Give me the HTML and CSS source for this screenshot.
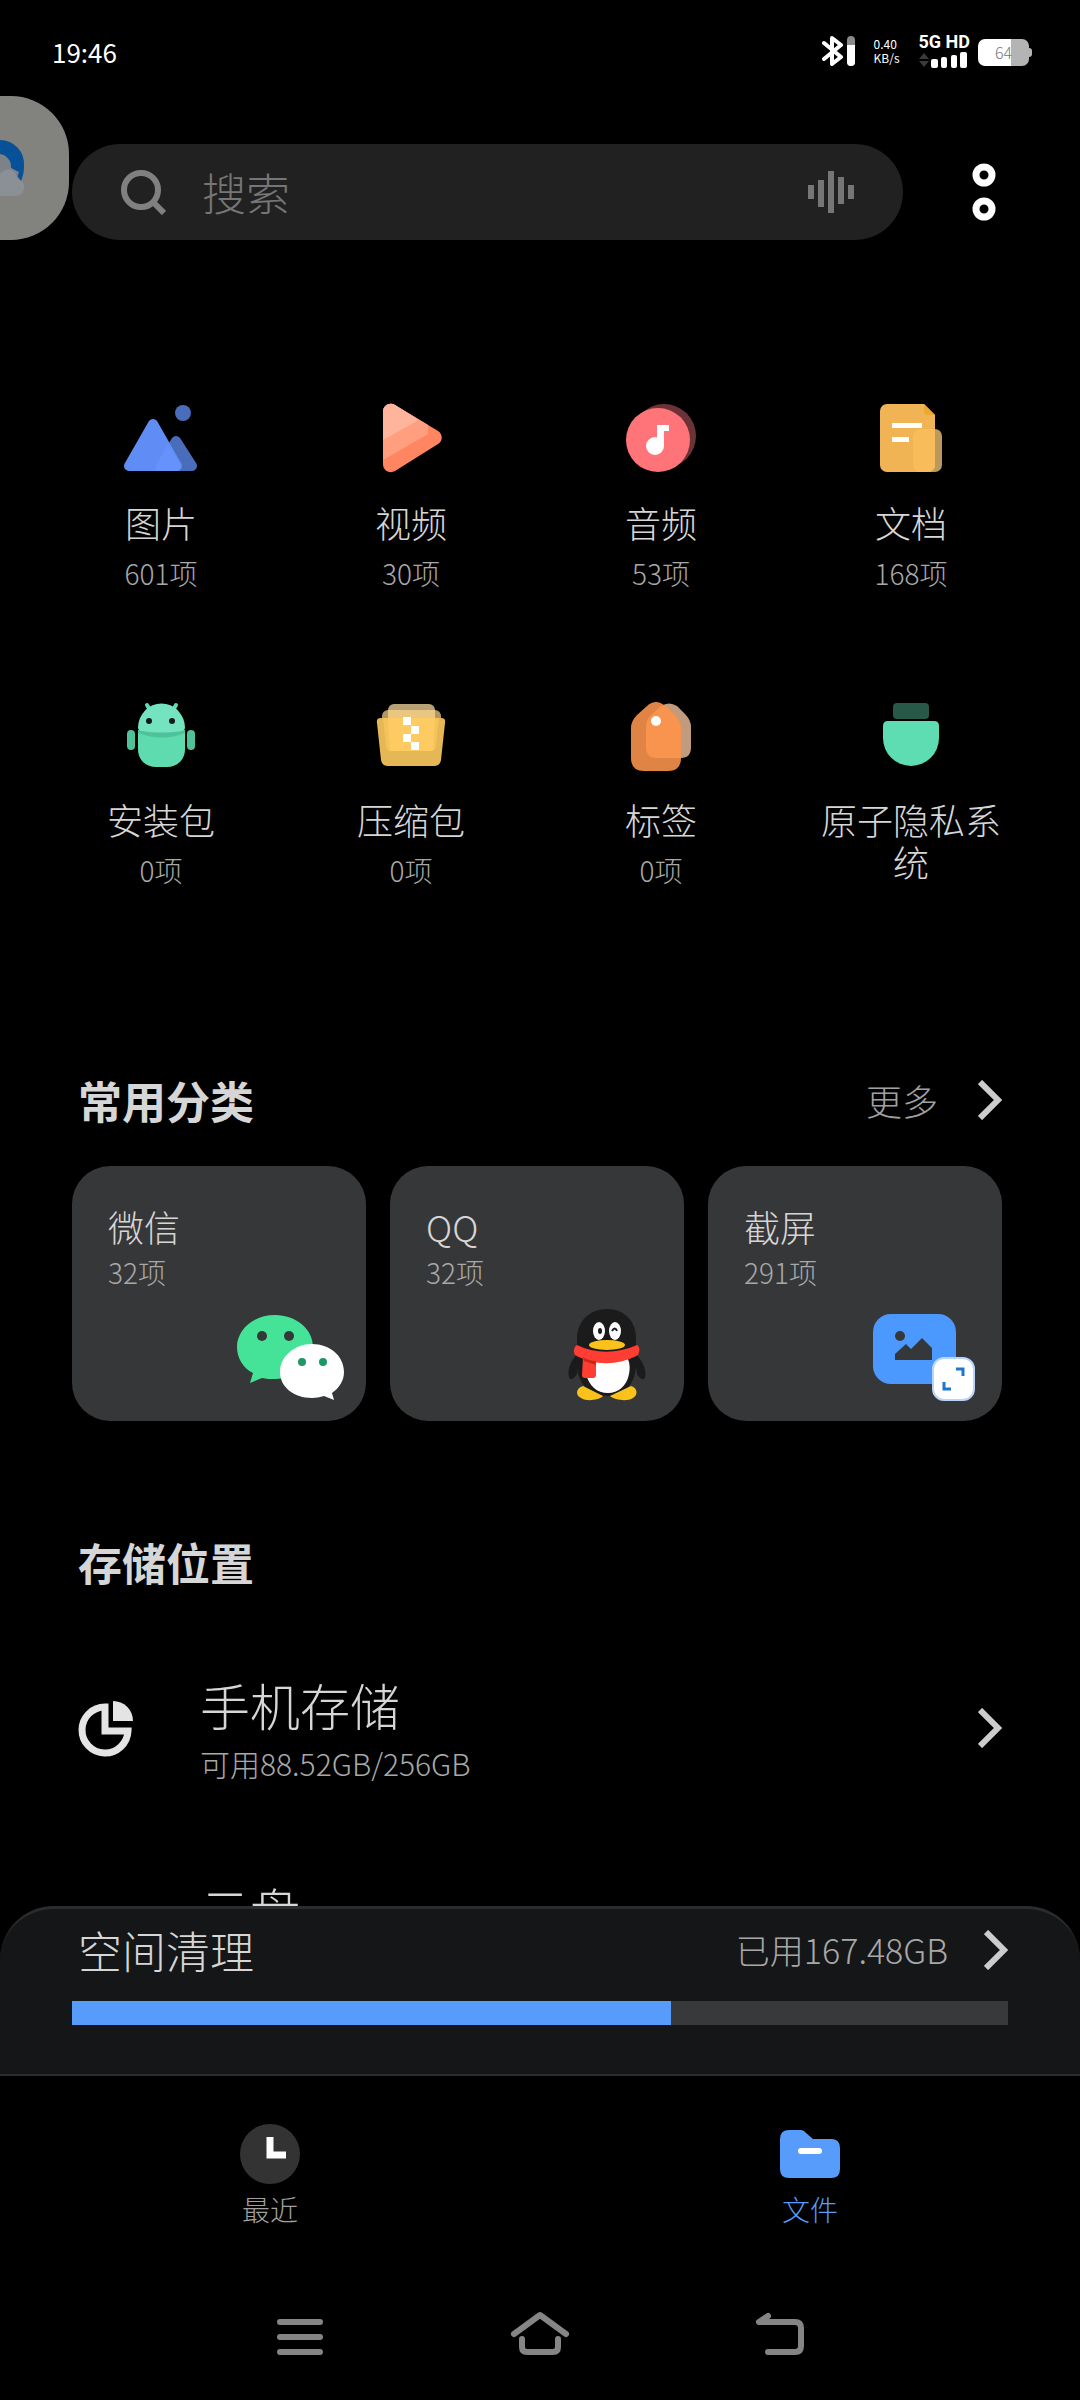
FILE: index.html
```html
<!DOCTYPE html>
<html lang="zh-CN">
<head>
  <meta charset="UTF-8" />
  <meta name="viewport" content="width=device-width, initial-scale=1.0"/>
  <title>文件管理</title>
  <link rel="stylesheet" href="styles.css">
</head>
<body>
  <div class="statusbar">
    <span class="time">19:46</span>
    <div class="status-icons">
      <svg class="bluetooth" width="34" height="32" viewBox="0 0 34 32">
        <path d="M2 8l17 14-9 7V3l9 7L2 24" fill="none" stroke="#fff" stroke-width="4" stroke-linejoin="round" stroke-linecap="round"/>
        <rect x="25" y="1" width="8" height="30" rx="4" fill="#8a8a8a"/>
        <path d="M25 10h8v17a4 4 0 0 1-8 0z" fill="#fff"/>
      </svg>
      <div class="speed"><span>0.40</span><span>KB/s</span></div>
      <div class="signal">
        <span>5G HD</span>
        <svg width="48" height="16" viewBox="0 0 48 16">
          <path d="M0 7l5-6 5 6zM0 9h10l-5 6z" fill="#3a3a3a"/>
          <g fill="#fff">
            <rect x="12" y="7" width="7" height="9" rx="2"/>
            <rect x="22" y="5" width="6" height="11" rx="2"/>
            <rect x="32" y="3" width="6" height="13" rx="2"/>
            <rect x="41" y="0" width="7" height="16" rx="2"/>
          </g>
        </svg>
      </div>
      <div class="battery"><span>64</span></div>
    </div>
  </div>

  <button class="floating-app" aria-label="浏览器">
    <svg width="28" height="64" viewBox="0 0 28 64">
      <path d="M0 4a24 24 0 0 1 24 26c0 6-1 10-3 15L10 30 0 22z" fill="#075199"/>
      <path d="M0 18a13 13 0 0 1 11 14l8 4-4 12H0z" fill="#7d8288"/>
      <path d="M0 38c4-6 13-6 16 0 0 8 9 5 8 13 0 5-3 9-8 9H0z" fill="#8b9096"/>
    </svg>
  </button>

  <header class="topbar">
    <label class="search">
      <svg width="46" height="46" viewBox="0 0 46 46" fill="none" stroke="#808080">
        <circle cx="21" cy="21" r="17" stroke-width="6"/>
        <path d="M32 32l12 12" stroke-width="6"/>
      </svg>
      <input type="text" placeholder="搜索" aria-label="搜索">
      <svg width="46" height="44" viewBox="0 0 46 44" fill="#767676">
        <rect x="0" y="15" width="6" height="14"/>
        <rect x="10" y="10" width="6" height="27"/>
        <rect x="20" y="1" width="6" height="42"/>
        <rect x="30" y="7" width="6" height="27"/>
        <rect x="40" y="15" width="6" height="14"/>
      </svg>
    </label>
    <button class="more-btn" aria-label="菜单">
      <svg width="24" height="58" viewBox="0 0 24 58" fill="none" stroke="#fff" stroke-width="7">
        <circle cx="12" cy="12" r="8"/>
        <circle cx="12" cy="46" r="8"/>
      </svg>
    </button>
  </header>

  <main>
    <nav class="categories">
      <a href="#">
        <svg width="96" height="80" viewBox="0 0 96 80">
          <circle cx="70" cy="13" r="8" fill="#496cbb"/>
          <path d="M63 41l16 25H48z" fill="#496cbb" stroke="#496cbb" stroke-width="10" stroke-linejoin="round"/>
          <path d="M40 24l24 42H16z" fill="#5f8df5" stroke="#5f8df5" stroke-width="10" stroke-linejoin="round"/>
          <path d="M55 43l12 21q2 7-3 7H44q-3 0-1-5z" fill="#6593fb"/>
        </svg>
        <span class="name">图片</span>
        <span class="count">601项</span>
      </a>
      <a href="#">
        <svg width="96" height="80" viewBox="0 0 96 80">
          <path d="M20 12c0-7 7-10 12-7l43 26c5 3 5 10 0 13L32 71c-5 3-12 0-12-7z" fill="#ff8660"/>
          <path d="M20 12c0-7 7-10 12-7l33 20v9L20 60z" fill="#ff9f80"/>
          <path d="M20 12c0-7 7-10 12-7l22 14v2L20 40z" fill="#ffb59c"/>
        </svg>
        <span class="name">视频</span>
        <span class="count">30项</span>
      </a>
      <a href="#">
        <svg width="96" height="80" viewBox="0 0 96 80">
          <circle cx="51" cy="36" r="32" fill="#6b3337"/>
          <circle cx="45" cy="40" r="32" fill="#ff7478"/>
          <circle cx="42" cy="46" r="9" fill="#fff"/>
          <path d="M44 25h12v6h-5v15h-7z" fill="#fff"/>
        </svg>
        <span class="name">音频</span>
        <span class="count">53项</span>
      </a>
      <a href="#">
        <svg width="96" height="80" viewBox="0 0 96 80">
          <rect x="50" y="29" width="29" height="43" rx="7" fill="#b9995d"/>
          <path d="M24 4h37l11 11v50a7 7 0 0 1-7 7H24a7 7 0 0 1-7-7V11a7 7 0 0 1 7-7z" fill="#f0b455"/>
          <path d="M61 4l11 11h-7q-4 0-4-4z" fill="#eda92f"/>
          <path d="M57 29h15v36a7 7 0 0 1-7 7h-8a7 7 0 0 1-7-7V36a7 7 0 0 1 7-7z" fill="#f8bc5a"/>
          <path d="M29 23h30v5H29zM29 37h17v5H29z" fill="#fff"/>
        </svg>
        <span class="name">文档</span>
        <span class="count">168项</span>
      </a>
      <a href="#">
        <svg width="96" height="80" viewBox="0 0 96 80">
          <path d="M34 8l4 7M63 8l-4 7" stroke="#5edcb0" stroke-width="4" stroke-linecap="round"/>
          <rect x="14" y="33" width="8" height="20" rx="4" fill="#4fc299"/>
          <rect x="74" y="33" width="8" height="20" rx="4" fill="#4fc299"/>
          <path d="M25 35q23 6 47 0v17c0 12-9 18-18 18H43c-9 0-18-6-18-18z" fill="#5edcb0"/>
          <path d="M25 33h47v3q-22 9-47 0z" fill="#4fc299"/>
          <path d="M25 31a23 24 0 0 1 47 0q0 2-3 3-20 3-41 0-3-1-3-3z" fill="#74e4c0"/>
          <circle cx="36" cy="24" r="3" fill="#101a16"/>
          <circle cx="59" cy="24" r="3" fill="#101a16"/>
        </svg>
        <span class="name">安装包</span>
        <span class="count">0项</span>
      </a>
      <a href="#">
        <svg width="96" height="80" viewBox="0 0 96 80">
          <rect x="19" y="13" width="59" height="24" rx="6" fill="#b29760"/>
          <rect x="25" y="7" width="47" height="24" rx="6" fill="#b8a275"/>
          <rect x="25" y="13" width="47" height="20" fill="#e9c781"/>
          <path d="M18 21h60q5 0 4 5l-4 37q-1 6-7 6H25q-6 0-7-6l-4-37q-1-5 4-5z" fill="#e6b755"/>
          <path d="M20 21h56l-3 28q-1 5-5 5H28q-4 0-5-5z" fill="#f5c35b"/>
          <path d="M25 21h47l-2 33H27z" fill="#fdcb62"/>
          <path d="M40 20h8v8h-8zM48 29h8v8h-8zM40 37h8v8h-8zM48 45h8v8h-8z" fill="#fff"/>
        </svg>
        <span class="name">压缩包</span>
        <span class="count">0项</span>
      </a>
      <a href="#">
        <svg width="96" height="80" viewBox="0 0 96 80">
          <path d="M48 9q8-5 16 0l8 8q6 6 6 13v20q0 11-10 11H44q-11 0-11-11V30q0-7 5-12z" fill="#c09b7e"/>
          <path d="M34 9q9-8 18 0l10 9q6 6 6 13v30q0 13-13 13H31q-13 0-13-13V31q0-7 6-13z" fill="#e08445"/>
          <path d="M48 9q3-2 6 1l8 8q6 6 6 13v30H44q-11 0-11-11V30q0-7 5-12z" fill="#f9944e"/>
          <circle cx="43" cy="24" r="5" fill="#fff"/>
        </svg>
        <span class="name">标签</span>
        <span class="count">0项</span>
      </a>
      <a href="#">
        <svg width="96" height="80" viewBox="0 0 96 80">
          <rect x="30" y="6" width="36" height="16" rx="4" fill="#275848"/>
          <path d="M25 24h46q5 0 5 5v12a28 28 0 0 1-56 0V29q0-5 5-5z" fill="#5eddb2"/>
        </svg>
        <span class="name">原子隐私系统</span>
      </a>
    </nav>

    <section class="common">
      <div class="section-head">
        <h2>常用分类</h2>
        <a class="more" href="#">更多
          <svg class="chevron" width="24" height="40" viewBox="0 0 24 40"><path d="M2 2l18 18L2 38"/></svg>
        </a>
      </div>
      <div class="cards">
        <a class="card" href="#">
          <span class="name">微信</span>
          <span class="count">32项</span>
          <svg width="120" height="100" viewBox="0 0 120 100">
            <path d="M47 11c21 0 38 14 38 32S68 75 47 75c-5 0-9 0-13-1l-12 5 3-10C15 64 9 54 9 43 9 25 26 11 47 11z" fill="#45e398"/>
            <circle cx="34" cy="32" r="5" fill="#363738"/>
            <circle cx="61" cy="32" r="5" fill="#363738"/>
            <path d="M84 40c18 0 32 12 32 28 0 9-5 16-12 21l2 7-10-4c-4 1-8 2-12 2-18 0-32-11-32-26s14-28 32-28z" fill="#fff"/>
            <circle cx="74" cy="58" r="4" fill="#1e9862"/>
            <circle cx="95" cy="58" r="4" fill="#1e9862"/>
          </svg>
        </a>
        <a class="card" href="#">
          <span class="name">QQ</span>
          <span class="count">32项</span>
          <svg width="120" height="100" viewBox="-6 0 120 100">
            <path d="M27 48c-8 8-12 17-10 25 1 4 5 2 8-3zM82 48c8 8 13 17 11 25-1 4-5 2-8-3z" fill="#1b1b1b"/>
            <path d="M55 5c18 0 29 13 29 29v26c0 20-12 32-29 32S25 80 25 60V34C25 18 37 5 55 5z" fill="#1b1b1b"/>
            <path d="M31 82c-7 2-8 9-2 12 6 4 18 2 22-2zM79 82c7 2 7 9 2 12-6 4-18 2-23-2z" fill="#fcc21c"/>
            <path d="M34 55h42c2 5 2 10 1 15-2 12-11 19-21 19-11 0-19-7-22-19z" fill="#fff"/>
            <path d="M25 41c18 9 40 9 60 0 3 2 3 6 1 10-20 11-44 11-63 0-2-4-1-8 2-10z" fill="#ff3d32"/>
            <path d="M31 53q6 4 13 4v14q0 3-3 3h-8q-3 0-3-3z" fill="#ff3d32"/>
            <path d="M31 53q6 4 13 4v4l-12-4z" fill="#ce2519"/>
            <ellipse cx="47" cy="27" rx="6" ry="9" fill="#fff"/>
            <ellipse cx="63" cy="27" rx="6" ry="9" fill="#fff"/>
            <ellipse cx="48" cy="27" rx="2" ry="3" fill="#1b1b1b"/>
            <path d="M60 27q3-5 5 0" fill="none" stroke="#1b1b1b" stroke-width="2"/>
            <ellipse cx="55" cy="41" rx="18" ry="5" fill="#fcc21c"/>
          </svg>
        </a>
        <a class="card" href="#">
          <span class="name">截屏</span>
          <span class="count">291项</span>
          <svg width="120" height="100" viewBox="0 0 120 100">
            <rect x="9" y="10" width="83" height="70" rx="18" fill="#4b99ff"/>
            <circle cx="36" cy="32" r="5" fill="#363738"/>
            <path d="M31 56v-6l11-10 5 5 11-11 10 10v12z" fill="#363738"/>
            <rect x="69" y="54" width="41" height="42" rx="11" fill="#fff" stroke="#b8d4fa" stroke-width="2"/>
            <path d="M92 65h7v7M80 78v7h7" fill="none" stroke="#1d76d2" stroke-width="3"/>
          </svg>
        </a>
      </div>
    </section>

    <section class="storage">
      <h2>存储位置</h2>
      <a class="storage-row" href="#">
        <svg width="56" height="58" viewBox="0 0 56 58">
          <path d="M27 8a23 23 0 1 0 23 24H27z" fill="none" stroke="#e4e4e4" stroke-width="7"/>
          <path d="M35 2a20 20 0 0 1 20 20H35z" fill="#e4e4e4"/>
        </svg>
        <div class="storage-text">
          <span class="storage-name">手机存储</span>
          <span class="detail">可用88.52GB/256GB</span>
        </div>
        <svg class="chevron" width="24" height="40" viewBox="0 0 24 40"><path d="M2 2l18 18L2 38"/></svg>
      </a>
      <a class="storage-row" href="#">
        <svg width="56" height="58" viewBox="0 0 56 58">
          <path d="M14 55a6 6 0 0 1 0-12 12 12 0 0 1 24-1 7 7 0 0 1 4 13z" fill="none" stroke="#e4e4e4" stroke-width="5"/>
        </svg>
        <div class="storage-text">
          <span class="storage-name">云盘</span>
        </div>
      </a>
    </section>
  </main>

  <section class="cleaner">
    <a class="cleaner-head" href="#">
      <span class="cleaner-title">空间清理</span>
      <span class="used">已用167.48GB</span>
      <svg class="chevron" width="24" height="40" viewBox="0 0 24 40"><path d="M2 2l18 18L2 38"/></svg>
    </a>
    <progress value="64" max="100" aria-label="已用空间"></progress>
  </section>

  <nav class="tabs">
    <a href="#">
      <svg width="60" height="60" viewBox="0 0 60 60">
        <circle cx="30" cy="30" r="30" fill="#333"/>
        <path d="M30 13v18h16" fill="none" stroke="#fff" stroke-width="7"/>
      </svg>
      最近
    </a>
    <a class="active" href="#">
      <svg width="60" height="60" viewBox="0 0 60 60">
        <path d="M9 6h12q3 0 5 3l7 6h18q9 0 9 9v21q0 9-9 9H9q-9 0-9-9V15q0-9 9-9z" fill="#579cfb"/>
        <rect x="18" y="24" width="24" height="6" rx="3" fill="#fff"/>
      </svg>
      文件
    </a>
  </nav>

  <div class="sysnav">
    <button aria-label="最近任务">
      <svg width="60" height="48" viewBox="0 0 60 48"><path d="M10 12h40M10 27h40M10 42h40"/></svg>
    </button>
    <button aria-label="主屏幕">
      <svg width="60" height="48" viewBox="0 0 60 48"><path d="M4 24L30 5l26 19M12 29v8q0 5 5 5h26q5 0 5-5v-8"/></svg>
    </button>
    <button aria-label="返回">
      <svg width="60" height="48" viewBox="0 0 60 48"><path d="M18 6L9 12h36q6 0 6 6v18q0 6-6 6H18"/></svg>
    </button>
  </div>
</body>
</html>
```

FILE: styles.css
```css
* {
  box-sizing: border-box;
}
body {
  margin: 0;
  height: 100vh;
  display: flex;
  flex-direction: column;
  background: #000;
  color: #d6d6d6;
  font-family: "Noto Sans CJK SC", sans-serif;
  font-weight: 300;
}
a {
  color: inherit;
  text-decoration: none;
}
button {
  background: none;
  border: none;
  padding: 0;
  cursor: pointer;
}
svg {
  display: block;
  flex: none;
}
h2 {
  margin: 0;
  font-size: 44px;
  line-height: 56px;
  font-weight: bold;
}

/* status bar */
.statusbar {
  display: flex;
  justify-content: space-between;
  align-items: center;
  height: 102px;
  padding: 0 51px 0 52px;
  color: #fff;
}
.time {
  font-size: 26px;
  font-weight: normal;
}
.status-icons {
  display: flex;
  align-items: center;
}
.speed {
  display: flex;
  flex-direction: column;
  margin: 0 19px 0 18px;
  font-size: 12px;
  line-height: 14px;
  font-weight: normal;
}
.signal {
  display: flex;
  flex-direction: column;
  gap: 2px;
  margin-right: 8px;
  font: bold 18px/16px Roboto, sans-serif;
}
.battery {
  position: relative;
  width: 51px;
  height: 27px;
  margin-top: 2px;
  border-radius: 7px;
  background: linear-gradient(90deg, #fff 64%, #b4b4b4 64%);
  color: #777;
  font-size: 16px;
  line-height: 27px;
  text-align: center;
}
.battery::after {
  content: "";
  position: absolute;
  left: 51px;
  top: 9px;
  width: 3px;
  height: 9px;
  border-radius: 0 3px 3px 0;
  background: #b4b4b4;
}

/* app docked at the screen edge */
.floating-app {
  position: absolute;
  left: 0;
  top: 96px;
  width: 69px;
  height: 144px;
  border-radius: 0 58px 58px 0;
  background: #82827f;
}

/* search */
.topbar {
  display: flex;
  align-items: center;
  gap: 69px;
  padding: 42px 84px 0 72px;
}
.search {
  flex: 1;
  display: flex;
  align-items: center;
  height: 96px;
  padding: 0 49px 0 48px;
  border-radius: 48px;
  background: #212121;
}
.search input {
  flex: 1;
  min-width: 0;
  margin-left: 36px;
  padding: 0;
  border: none;
  outline: none;
  background: none;
  color: #d6d6d6;
  font: inherit;
  font-size: 44px;
  line-height: 56px;
}
.search input::placeholder {
  color: #767676;
}

main {
  flex: 1;
  min-height: 0;
  overflow-y: auto;
  scrollbar-width: none;
  padding-top: 160px;
}

/* categories */
.categories {
  display: grid;
  grid-template-columns: repeat(4, 1fr);
  row-gap: 105px;
  padding: 0 44px 0 36px;
}
.categories a {
  display: flex;
  flex-direction: column;
  align-items: center;
  padding: 0 24px;
  text-align: center;
}
.name {
  font-size: 36px;
  line-height: 42px;
}
.count {
  font-size: 28px;
  line-height: 38px;
  color: #a8a8a8;
}
.categories .name {
  margin-top: 21px;
}
.categories .count {
  margin-top: 11px;
}

/* cards */
.common {
  padding: 183px 78px 0 72px;
}
.section-head {
  display: flex;
  justify-content: space-between;
  align-items: center;
  padding-left: 6px;
}
.more {
  display: flex;
  align-items: center;
  gap: 40px;
  font-size: 36px;
  line-height: 42px;
  color: #a0a0a0;
}
.chevron {
  fill: none;
  stroke: #ccc;
  stroke-width: 6px;
}
.cards {
  display: grid;
  grid-template-columns: repeat(3, 1fr);
  gap: 24px;
  margin-top: 38px;
}
.card {
  display: flex;
  flex-direction: column;
  padding: 39px 18px 17px 36px;
  border-radius: 38px;
  background: #363738;
}
.card .count {
  margin-top: 6px;
}
.card svg {
  align-self: flex-end;
  margin-top: 13px;
}

/* storage */
.storage {
  padding: 113px 78px 0 78px;
}
.storage-row {
  display: flex;
  align-items: center;
  gap: 66px;
  margin-top: 84px;
}
.storage-row + .storage-row {
  margin-top: 97px;
}
.storage-text {
  flex: 1;
  display: flex;
  flex-direction: column;
  gap: 10px;
}
.storage-name {
  font-size: 50px;
  line-height: 60px;
}
.detail {
  font-size: 30px;
  line-height: 38px;
  color: #a8a8a8;
}

/* space cleaner */
.cleaner {
  padding: 13px 72px 49px;
  border: 2px solid #2b2c2d;
  border-width: 3px 0 2px;
  border-radius: 54px 54px 0 0;
  background: #151617;
}
.cleaner-head {
  display: flex;
  align-items: center;
  padding-left: 6px;
}
.cleaner-title {
  flex: 1;
  font-size: 44px;
  line-height: 56px;
}
.used {
  margin-right: 36px;
  font-size: 34px;
  line-height: 42px;
  color: #a8a8a8;
}
progress {
  display: block;
  width: 100%;
  height: 24px;
  margin-top: 23px;
  border: none;
  appearance: none;
  background: #38393a;
}
progress::-webkit-progress-bar {
  background: #38393a;
}
progress::-webkit-progress-value {
  background: #579cfb;
}
progress::-moz-progress-bar {
  background: #579cfb;
}

/* bottom tabs */
.tabs {
  display: grid;
  grid-template-columns: 1fr 1fr;
  padding: 48px 0 82px;
}
.tabs a {
  display: flex;
  flex-direction: column;
  align-items: center;
  gap: 6px;
  font-size: 28px;
  line-height: 38px;
  color: #a0a0a0;
}
.tabs .active {
  color: #579cfb;
}

/* system navigation */
.sysnav {
  display: grid;
  grid-template-columns: repeat(3, 1fr);
  padding: 0 180px 42px;
}
.sysnav button {
  display: flex;
  justify-content: center;
}
.sysnav svg {
  fill: none;
  stroke: #858585;
  stroke-width: 6px;
  stroke-linecap: round;
  stroke-linejoin: round;
}
```
